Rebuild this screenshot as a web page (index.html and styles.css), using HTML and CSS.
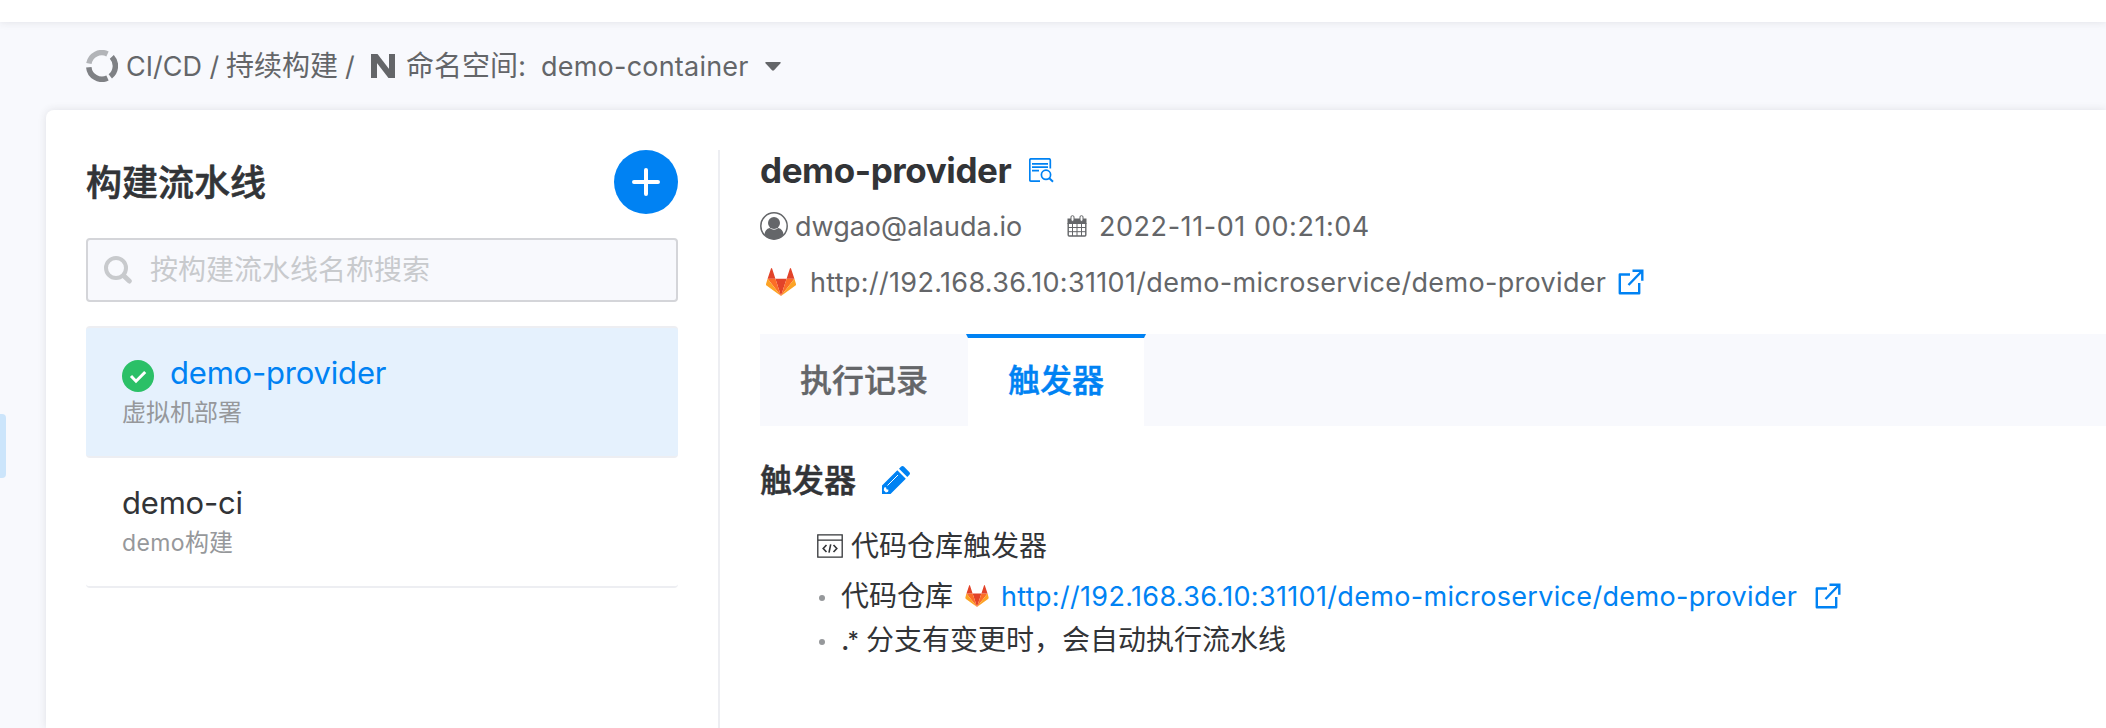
FILE: index.html
```html
<!DOCTYPE html>
<html lang="zh-CN">
<head>
<meta charset="utf-8">
<title>demo-provider</title>
<link rel="stylesheet" href="styles.css">
</head>
<body>
<svg class="defs" width="0" height="0" aria-hidden="true">
  <symbol id="gitlab" viewBox="0 0 30 28">
    <path fill="#e24329" d="M15 28 20.600 10.800H9.400z"/>
    <path fill="#fc6d26" d="M15 28 9.400 10.800H1.600zM15 28l5.600-17.200h7.800z"/>
    <path fill="#fca326" d="M1.600 10.800 0 16q-.2.800.5 1.400L15 28zM28.400 10.800 30 16q.2.800-.5 1.400L15 28z"/>
    <path fill="#e24329" d="M1.600 10.800h7.800L6.100.5Q5.600-.4 5 .5zM28.400 10.800h-7.800L23.900.5q.5-.9 1.100 0z"/>
  </symbol>
  <symbol id="external" viewBox="0 0 26 26">
    <path fill="none" stroke="currentColor" stroke-width="2.400" stroke-linejoin="round" d="M12 5.500H1.800v18.700h19.400V14"/>
    <path fill="none" stroke="currentColor" stroke-width="2.400" d="M14.500 1.700h9.800v10M24 2 10.500 16"/>
  </symbol>
</svg>
<div class="topbar"></div>
<div class="workspace">
  <aside class="rail"><span class="rail-handle"></span></aside>
  <main class="main">
    <nav class="crumbs">
      <svg class="crumb-ring" width="32" height="32" viewBox="0 0 32 32" fill="none" stroke-width="5.500">
        <path stroke="#b2b4b8" d="M2.900 13.500A13.250 13.250 0 0 1 21.500 3.900"/>
        <path stroke="#7f8185" d="M25.800 6.900A13.250 13.250 0 0 1 24.300 26.400"/>
        <path stroke="#7f8185" d="M21.500 28.100A13.250 13.250 0 0 1 2.800 17.200"/>
      </svg>
      <span class="latin crumb-root">CI/CD /</span>
      <span class="crumb-build">持续构建</span>
      <span class="latin crumb-slash">/</span>
      <svg class="crumb-n" width="24" height="24" viewBox="0 0 24 24" fill="none" stroke="#646669" stroke-width="6" stroke-linejoin="round"><path d="M3 24V0M21 24V0"/><path d="M3.500 1 20.500 23"/></svg>
      <span class="crumb-label">命名空间:</span>
      <span class="latin crumb-ns">demo-container</span>
      <svg class="caret" width="16" height="9" viewBox="0 0 16 9"><path fill="#646669" d="M1 0h14q1.200.3.500 1.300L9 8.300q-1 .9-2 0L.5 1.300Q-.2.300 1 0z"/></svg>
    </nav>
    <div class="card">
      <section class="list">
        <header class="list-head">
          <h1 class="list-title">构建流水线</h1>
          <button class="add"><svg width="28" height="28" viewBox="0 0 28 28" stroke="#fff" stroke-width="4" stroke-linecap="round"><path d="M14 2v24M2 14h24"/></svg></button>
        </header>
        <div class="search">
          <svg width="28" height="28" viewBox="0 0 28 28" fill="none" stroke="#c8cacd"><circle cx="12" cy="12" r="10" stroke-width="4"/><path stroke-width="5" stroke-linecap="round" d="M20 20l5.300 5"/></svg>
          <span>按构建流水线名称搜索</span>
        </div>
        <article class="item item-active">
          <div class="item-row">
            <svg width="32" height="32" viewBox="0 0 32 32" fill="none"><circle cx="16" cy="16" r="16" fill="#2bc067"/><path stroke="#fff" stroke-width="3" d="M9 16l5 5.200 9.200-9.200"/></svg>
            <span class="item-name">demo-provider</span>
          </div>
          <div class="item-sub">虚拟机部署</div>
        </article>
        <article class="item">
          <div class="item-row"><span class="item-name">demo-ci</span></div>
          <div class="item-sub"><span class="sub-latin">demo</span>构建</div>
        </article>
      </section>
      <section class="detail">
        <div class="title-row">
          <h2 class="detail-title">demo-provider</h2>
          <svg width="25" height="25" viewBox="0 0 25 25" fill="none" stroke="#0082f3" stroke-width="1.700">
            <path d="M21.300 10.500V2.200Q21.300.8 20 .8H2.200Q.8.800.8 2.200v19.600q0 1.400 1.400 1.400H11"/>
            <path d="M3 5.800h16M3 9.200h16M3 12.700h7"/><circle cx="17" cy="16.800" r="4.600"/><path stroke-width="2" d="M20.300 20.200l3.700 3.500"/>
          </svg>
        </div>
        <div class="meta">
          <svg width="28" height="28" viewBox="0 0 28 28"><circle cx="14" cy="14" r="13.200" fill="none" stroke="#646669" stroke-width="1.500"/><circle cx="14" cy="11" r="6" fill="#646669"/><path fill="#646669" d="M4.500 22.500q.5-5.300 5.200-6.500 4.300 3.400 8.600 0 4.700 1.200 5.200 6.500Q20 27.300 14 27.300T4.500 22.500z"/></svg>
          <span class="latin user">dwgao@alauda.io</span>
          <svg class="calendar" width="20" height="22" viewBox="0 0 20 22" fill="none" stroke="#646669"><path fill="#646669" stroke="none" d="M.5 3.500h19V9H.5z"/><path stroke-width="1.400" d="M1.200 8v12q0 1 1 1h15.600q1 0 1-1V8"/><path stroke-width="1" d="M1 12.500h18M1 16.700h18M5.500 9v12M10 9v12M14.500 9v12"/><rect x="4" y=".7" width="3" height="5.600" rx="1.300" fill="#fff"/><rect x="13" y=".7" width="3" height="5.600" rx="1.300" fill="#fff"/></svg>
          <span class="latin date">2022-11-01 00:21:04</span>
        </div>
        <div class="meta repo">
          <svg width="30" height="28"><use href="#gitlab"/></svg>
          <span class="latin url">http://192.168.36.10:31101/demo-microservice/demo-provider</span>
          <svg class="blue" width="26" height="26"><use href="#external"/></svg>
        </div>
        <div class="tabs">
          <div class="tab">执行记录</div>
          <div class="tab tab-active">触发器</div>
        </div>
        <div class="section-head">
          <h3>触发器</h3>
          <svg width="28" height="28" viewBox="0 0 28 28"><path fill="#0082f3" d="M0 28v-8.500L15.300 4.200l8.500 8.500L8.500 28zM17 2.700 18.900.8q1.600-1.600 3.200 0l5.100 5.100q1.600 1.600 0 3.200l-1.900 1.900z"/><path stroke="#fff" stroke-width="1" fill="none" d="M5.500 19.500 16 9"/><path fill="#fff" d="M2.200 21.500l1.800-.2.500 2 2 .5-.4 2-2.200.6-2.200-2.200z"/></svg>
        </div>
        <div class="trigger">
          <div class="trigger-title">
            <svg width="26" height="24" viewBox="0 0 26 24" fill="none" stroke="#323437" stroke-width="1.300"><path d="M.8.800h24.400v22.400H.8zM.8 6.200h24.400"/><path stroke-width="1.600" d="M9.500 11l-3.300 3.500L9.500 18M16.500 11l3.300 3.500-3.300 3.500M13.700 10.300l-1.700 8.400"/></svg>
            <span>代码仓库触发器</span>
          </div>
          <div class="rule rule-repo">
            <i class="dot"></i><span class="rule-label">代码仓库</span>
            <svg width="24" height="22" viewBox="0 0 30 28"><use href="#gitlab"/></svg>
            <span class="latin url url-link blue">http://192.168.36.10:31101/demo-microservice/demo-provider</span>
            <svg class="blue" width="26" height="26"><use href="#external"/></svg>
          </div>
          <div class="rule">
            <i class="dot"></i><span class="rule-pattern">.<span class="rule-star">*</span></span><span>分支有变更时，会自动执行流水线</span>
          </div>
        </div>
      </section>
    </div>
  </main>
</div>
</body>
</html>
```
FILE: styles.css
```css
* { box-sizing: border-box; }
body {
  margin: 0;
  height: 728px;
  overflow: hidden;
  background: #f8f9fd;
  color: #323437;
  font-family: Inter, "Noto Sans CJK SC", sans-serif;
  font-size: 28px;
  line-height: 40px;
  white-space: nowrap;
}
h1, h2, h3 { margin: 0; }
svg { flex: none; display: block; }
span { flex: none; }
.defs { position: absolute; }
.latin { padding-top: 1px; font-size: 27px; }
.blue { color: #0082f3; }
.topbar { height: 22px; background: #fff; box-shadow: 0 0 8px rgba(50, 52, 55, .12); }
.workspace { display: flex; height: 706px; }
.rail { width: 46px; padding-top: 392px; }
.rail-handle { display: block; width: 6px; height: 64px; border-radius: 0 4px 4px 0; background: #cce5fb; }
.main { flex: 1; min-width: 0; }

.crumbs { display: flex; align-items: center; height: 88px; padding-left: 40px; color: #646669; }
.crumb-root { width: 100px; margin-left: 8px; }
.crumb-slash { width: 9px; margin-left: 7px; }
.crumb-n { margin-left: 17px; }
.crumb-build { width: 112px; }
.crumb-label { width: 122px; margin-left: 11px; }
.crumb-ns { width: 208px; margin-left: 13px; letter-spacing: .22px; }
.caret { margin-left: 16px; }

.card { display: flex; height: 618px; padding: 40px 0 0 40px; border-radius: 8px 0 0 0; background: #fff; box-shadow: 0 0 8px rgba(50, 52, 55, .12); }
.list { width: 592px; }
.list-head { display: flex; align-items: center; justify-content: space-between; height: 64px; }
.list-title { padding-top: 1px; font-size: 36px; font-weight: 500; -webkit-text-stroke: .6px; }
.add { display: flex; align-items: center; justify-content: center; width: 64px; height: 64px; padding: 0; border: 0; border-radius: 50%; background: #0082f3; }
.search { display: flex; align-items: center; gap: 18px; height: 64px; margin: 24px 0; padding-left: 16px; border: 2px solid #d4d5d9; border-radius: 4px; background: #f8f9fd; color: #c8cacd; }
.item { height: 130px; padding: 26px 36px 0; border-bottom: 2px solid #edeef2; border-radius: 4px; }
.item-active { height: 132px; padding-top: 28px; border-top: 2px solid #edeef2; background: #e5f1fd; }
.item-row { display: flex; align-items: center; gap: 16px; height: 40px; }
.item-name { margin-top: -2px; font-size: 31px; letter-spacing: -.2px; }
.item-active .item-name { color: #0082f3; margin-top: -6px; }
.item-sub { padding-top: 2px; font-size: 24px; line-height: 34px; color: #96989b; }
.item-active .item-sub { padding-top: 0; }
.sub-latin { font-size: 23px; letter-spacing: .4px; }

.detail { flex: 1; min-width: 0; margin-left: 40px; padding-left: 40px; border-left: 2px solid #edeef2; }
.title-row { display: flex; align-items: center; height: 40px; }
.detail-title { width: 253px; margin-right: 16px; font-size: 35px; font-weight: 650; letter-spacing: -.4px; }
.meta { display: flex; align-items: center; height: 40px; margin-top: 16px; color: #646669; }
.user { width: 228px; margin-left: 7px; }
.calendar { margin: 0 12px 0 44px; }
.date { letter-spacing: .55px; }
.repo { padding-left: 6px; }
.url { width: 796px; margin: 0 12px 0 14px; letter-spacing: .33px; }
.tabs { display: flex; height: 92px; margin-top: 32px; background: #f8f9fd; }
.tab { width: 206px; padding: 27px 40px; color: #646669; font-size: 32px; font-weight: 500; -webkit-text-stroke: .4px; }
.tab-active { width: 180px; padding: 23px 40px; border: solid #f8f9fd; border-width: 0 2px; border-top: 4px solid #0082f3; background: #fff; color: #0082f3; }
.section-head { display: flex; align-items: center; gap: 26px; height: 40px; margin-top: 34px; }
.section-head h3 { padding-top: 1px; font-size: 32px; font-weight: 500; -webkit-text-stroke: .5px; }
.trigger { padding-left: 57px; }
.trigger-title { display: flex; align-items: center; gap: 8px; height: 40px; margin-top: 26px; }
.rule { display: flex; align-items: center; height: 40px; margin-top: 4px; }
.rule-repo { margin-top: 10px; }
.dot { width: 6px; height: 6px; margin: 3px 16px 0 2px; border-radius: 50%; background: #96989b; }
.rule-label { width: 112px; margin-right: 12px; }
.url-link { margin-left: 12px; margin-right: 18px; }
.rule-pattern { width: 25px; letter-spacing: -2px; font-weight: 500; }
.rule-star { font-size: 22px; line-height: 1; vertical-align: 3px; }
```
